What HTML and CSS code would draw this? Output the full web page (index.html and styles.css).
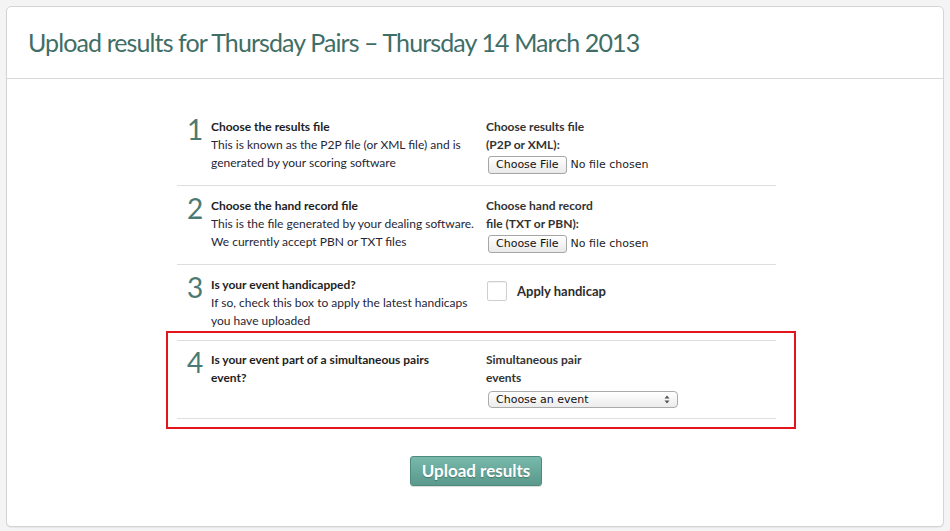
FILE: index.html
```html
<!DOCTYPE html>
<html lang="en">
<head>
<meta charset="utf-8">
<title>Upload results</title>
<link rel="stylesheet" href="styles.css">
</head>
<body>
<div class="card">
  <div class="card-header">
    <h1 class="title">Upload results for Thursday Pairs – Thursday 14 March 2013</h1>
  </div>
  <div class="card-body">
    <div class="steps">
      <div class="step">
        <div class="num">1</div>
        <div class="desc">
          <div class="desc-title">Choose the results file</div>
          <div class="desc-text">This is known as the P2P file (or XML file) and is generated by your scoring software</div>
        </div>
        <div class="field">
          <div class="field-label">Choose results file<br>(P2P or XML):</div>
          <div class="file"><span class="file-btn">Choose File</span><span class="file-name">No file chosen</span></div>
        </div>
      </div>
      <div class="step">
        <div class="num">2</div>
        <div class="desc">
          <div class="desc-title">Choose the hand record file</div>
          <div class="desc-text">This is the file generated by your dealing software.<br>We currently accept PBN or TXT files</div>
        </div>
        <div class="field">
          <div class="field-label">Choose hand record<br>file (TXT or PBN):</div>
          <div class="file"><span class="file-btn">Choose File</span><span class="file-name">No file chosen</span></div>
        </div>
      </div>
      <div class="step">
        <div class="num">3</div>
        <div class="desc">
          <div class="desc-title">Is your event handicapped?</div>
          <div class="desc-text">If so, check this box to apply the latest handicaps<br>you have uploaded</div>
        </div>
        <div class="field check-field">
          <span class="checkbox"></span>
          <span class="check-label">Apply handicap</span>
        </div>
      </div>
      <div class="step step-highlight">
        <div class="num">4</div>
        <div class="desc">
          <div class="desc-title">Is your event part of a simultaneous pairs<br>event?</div>
        </div>
        <div class="field">
          <div class="field-label">Simultaneous pair<br>events</div>
          <div class="select">
            <span class="select-text">Choose an event</span>
            <svg class="select-arrows" width="6" height="9" viewBox="0 0 6 9"><path d="M3 0.5 L5.5 3.5 H0.5 Z M3 8.5 L5.5 5.5 H0.5 Z" fill="#555"/></svg>
          </div>
        </div>
      </div>
    </div>
    <div class="actions">
      <span class="upload-btn">Upload results</span>
    </div>
  </div>
</div>
</body>
</html>
```

FILE: styles.css
```css
html, body {
  margin: 0;
  padding: 0;
}
body {
  background: #f4f4f4;
  font-family: Lato, "Open Sans", sans-serif;
  color: #222;
}
.card {
  margin: 6px;
  height: 521px;
  background: #fff;
  border: 1px solid #d4d4d4;
  border-radius: 5px;
  box-shadow: 0 1px 1px rgba(0,0,0,0.06);
  box-sizing: border-box;
}
.card-header {
  height: 71px;
  border-bottom: 1px solid #d8d8d8;
  display: flex;
  align-items: center;
  padding-left: 21px;
}
.title {
  margin: 0;
  font-weight: 400;
  font-size: 25px;
  color: #3f6e67;
  letter-spacing: -0.9px;
  padding-bottom: 2px;
}
.card-body {
  padding-top: 28px;
}
.steps {
  width: 599px;
  margin-left: 170px;
}
.step {
  display: grid;
  grid-template-columns: 34px 275px 1fr;
  padding: 11px 0 10px;
  border-bottom: 1px solid #dedede;
  font-size: 12px;
  line-height: 18px;
}
.num {
  padding-left: 10px;
  font-size: 28px;
  line-height: 20px;
  color: #4a7a72;
  font-weight: 400;
  padding-top: 1px;
}
.desc-title {
  font-weight: 700;
  color: #1e1e1e;
}
.desc-text {
  color: #262636;
}
.field-label {
  font-weight: 700;
  color: #333;
}
.file {
  display: flex;
  align-items: center;
  margin: 2px 0 1px 2px;
  height: 18px;
}
.file-btn {
  font-family: "DejaVu Sans", sans-serif;
  font-size: 11px;
  height: 18px;
  line-height: 16px;
  box-sizing: border-box;
  padding: 0 7px;
  border: 1px solid #a6a6a6;
  border-radius: 3px;
  background: linear-gradient(#ffffff, #e9e9e9);
  color: #111;
}
.file-name {
  font-family: "DejaVu Sans", sans-serif;
  font-size: 11px;
  margin-left: 4px;
  color: #222;
}
.check-field {
  display: flex;
  align-items: center;
  align-self: start;
  margin-top: 5px;
}
.checkbox {
  width: 20px;
  height: 20px;
  box-sizing: border-box;
  border: 1px solid #cfcfcf;
  border-radius: 2px;
  box-shadow: inset 0 1px 1px rgba(0,0,0,0.06);
  margin-left: 1px;
}
.check-label {
  margin-left: 10px;
  font-weight: 700;
  font-size: 13px;
  color: #2c2c2c;
}
.step-highlight {
  position: relative;
  padding-top: 10px;
  padding-bottom: 10px;
}
.step-highlight::after {
  content: "";
  position: absolute;
  top: -10px;
  left: -11px;
  right: -20px;
  bottom: -11px;
  border: 2px solid #e3151c;
  pointer-events: none;
}
.select {
  position: relative;
  margin: 4px 0 0 2px;
  width: 190px;
  height: 17px;
  box-sizing: border-box;
  border: 1px solid #ababab;
  border-radius: 4px;
  background: linear-gradient(#ffffff, #ececec);
  display: flex;
  align-items: center;
  padding-left: 7px;
}
.select-text {
  font-family: "DejaVu Sans", sans-serif;
  font-size: 11px;
  color: #111;
}
.select-arrows {
  position: absolute;
  right: 7px;
  top: 3px;
}
.actions {
  display: flex;
  justify-content: center;
  padding-top: 37px;
  padding-left: 2px;
}
.upload-btn {
  display: inline-block;
  width: 132px;
  height: 30px;
  box-sizing: border-box;
  border: 1px solid #4f8a7e;
  border-radius: 3px;
  background: linear-gradient(#77b9ab, #5a998b);
  color: #fff;
  font-weight: 700;
  font-size: 17px;
  line-height: 28px;
  text-align: center;
  text-shadow: 0 1px 1px rgba(0,0,0,0.25);
  box-shadow: 0 1px 1px rgba(0,0,0,0.15);
}
```
